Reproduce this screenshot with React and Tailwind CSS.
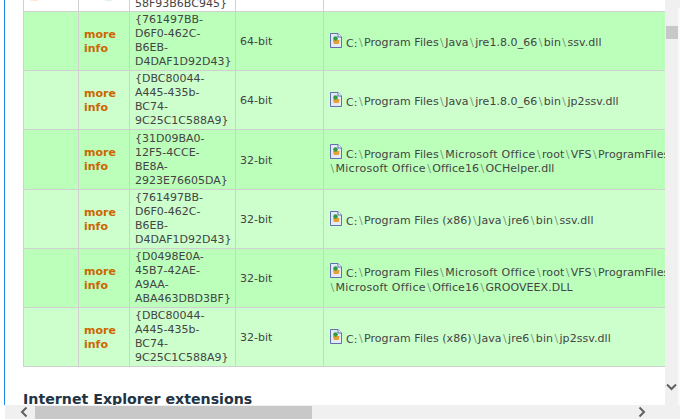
const rows = [
  { shade: 'bg-[#bbffbb]', h: 'h-[59px]', guid: ['{761497BB-', 'D6F0-462C-', 'B6EB-', 'D4DAF1D92D43}'], bits: '64-bit', path: ['C:\\Program Files\\Java\\jre1.8.0_66\\bin\\ssv.dll'] },
  { shade: 'bg-[#ccffcc]', h: 'h-[59px]', guid: ['{DBC80044-', 'A445-435b-', 'BC74-', '9C25C1C588A9}'], bits: '64-bit', path: ['C:\\Program Files\\Java\\jre1.8.0_66\\bin\\jp2ssv.dll'] },
  { shade: 'bg-[#bbffbb]', h: 'h-[60px]', guid: ['{31D09BA0-', '12F5-4CCE-', 'BE8A-', '2923E76605DA}'], bits: '32-bit', path: ['C:\\Program Files\\Microsoft Office\\root\\VFS\\ProgramFiles', '\\Microsoft Office\\Office16\\OCHelper.dll'] },
  { shade: 'bg-[#ccffcc]', h: 'h-[59px]', guid: ['{761497BB-', 'D6F0-462C-', 'B6EB-', 'D4DAF1D92D43}'], bits: '32-bit', path: ['C:\\Program Files (x86)\\Java\\jre6\\bin\\ssv.dll'] },
  { shade: 'bg-[#bbffbb]', h: 'h-[59px]', guid: ['{D0498E0A-', '45B7-42AE-', 'A9AA-', 'ABA463DBD3BF}'], bits: '32-bit', path: ['C:\\Program Files\\Microsoft Office\\root\\VFS\\ProgramFiles', '\\Microsoft Office\\Office16\\GROOVEEX.DLL'] },
  { shade: 'bg-[#ccffcc]', h: 'h-[59px]', guid: ['{DBC80044-', 'A445-435b-', 'BC74-', '9C25C1C588A9}'], bits: '32-bit', path: ['C:\\Program Files (x86)\\Java\\jre6\\bin\\jp2ssv.dll'] },
]

const FileIcon = () => (
  <svg width="12" height="15" viewBox="0 0 12 15" className="inline-block ml-[1px] mr-[4px] relative top-[-3px]">
    <path d="M.5.5h7.500l3.500 3.500v10.500H.5z" fill="#e4eafa" stroke="#5f6fb0" />
    <path d="M8 .5v3.500h3.500" fill="#fff" stroke="#5f6fb0" />
    <path d="M3 7h6.500l-.8 4H3.800z" fill="#e8a030" />
    <circle cx="5.500" cy="5.500" r="2.300" fill="#2f9e3f" />
  </svg>
)

// backslashes sit wider and fainter than the rest of the path
const PathText = ({ text }) =>
  text.split('\\').map((part, i) => (
    <span key={i}>
      {i > 0 && <span className="mx-[1.4px] text-[#7a9a7a]">\</span>}
      <span className={part === 'Microsoft Office' ? 'tracking-[0.28px]' : 'tracking-[0.05px]'}>{part}</span>
    </span>
  ))

const Row = ({ row }) => (
  <div className={`flex ${row.h} ${row.shade} border-b border-[#d0d0d0]`}>
    <div className="w-[55px] shrink-0 border-r border-[#d0d0d0]" />
    <div className="w-[51px] shrink-0 border-r border-[#d0d0d0] flex items-center pl-[5px] pt-[1px] font-bold text-[#cc6600] leading-[14px]">
      <span>more<br />info</span>
    </div>
    <div className="w-[106px] shrink-0 border-r border-[#d0d0d0] flex items-center pl-[5px] leading-[14px] whitespace-nowrap">
      <span>{row.guid.map((g) => <span key={g} className="block">{g}</span>)}</span>
    </div>
    <div className="w-[88px] shrink-0 border-r border-[#d0d0d0] flex items-center pl-[4px] pt-[3px]">{row.bits}</div>
    <div className="flex-1 flex items-center pl-[5px] pt-[4px] leading-[14px] whitespace-nowrap">
      <div>
        <FileIcon />
        <PathText text={row.path[0]} />
        {row.path[1] && <><br /><PathText text={row.path[1]} /></>}
      </div>
    </div>
  </div>
)

export default function App() {
  return (
    <div className="w-[680px] h-[419px] flex flex-col overflow-hidden bg-white text-[11px] text-[#444444] font-['DejaVu_Sans',sans-serif]">
      <div className="flex-1 flex min-h-0">
        <div className="flex-1 min-w-0 overflow-hidden pl-[4px]">
          <div className="border-l border-[#1e88e5] h-full pl-[18px]">
            <div className="w-[760px] border-l border-[#d0d0d0]">
              <div className="flex h-[12px] border-b border-[#d0d0d0] overflow-hidden">
                <div className="w-[55px] shrink-0 border-r border-[#d0d0d0] pl-[7px]">
                  <div className="w-[7px] h-[1px] bg-[#fbe6d8]" />
                </div>
                <div className="w-[51px] shrink-0 border-r border-[#d0d0d0] pl-[26px]">
                  <div className="w-[7px] h-[1px] bg-[#e0f5e0]" />
                </div>
                <div className="w-[106px] shrink-0 border-r border-[#d0d0d0] flex items-end pl-[5px] leading-[14px] whitespace-nowrap">58F93B6BC945&#125;</div>
                <div className="w-[88px] shrink-0 border-r border-[#d0d0d0]" />
              </div>
              {rows.map((row, i) => <Row key={i} row={row} />)}
            </div>
            <h2 className="mt-[23px] text-[14.2px] font-bold leading-[18px] text-[#223344] whitespace-nowrap">Internet Explorer extensions</h2>
          </div>
        </div>
        <div className="w-[15px] shrink-0 flex">
          <div className="w-[13px] bg-[#f0f0f0] flex flex-col">
            <div className="mt-[26px] w-[12px] h-[13px] ml-[1px] bg-[#c8c8c8]" />
            <svg width="13" height="8" viewBox="0 0 13 8" className="mt-[344px]">
              <path d="M2 1.500l4.500 4.500L11 1.500" fill="none" stroke="#606060" strokeWidth="2" />
            </svg>
          </div>
          <div className="w-[2px] flex flex-col bg-[#f0f0f0]">
            <div className="mt-[8px] flex-1 bg-[#fafafa]" />
          </div>
        </div>
      </div>
      <div className="h-[14px] shrink-0 ml-[5px] bg-[#f0f0f0] flex items-center">
        <svg width="10" height="12" viewBox="0 0 10 12" className="ml-[14px] shrink-0">
          <path d="M7.500 1.500L3 6l4.500 4.500" fill="none" stroke="#606060" strokeWidth="2" />
        </svg>
        <div className="ml-[6px] w-[277px] h-[13px] mt-[1px] bg-[#c8c8c8] shrink-0" />
        <svg width="10" height="12" viewBox="0 0 10 12" className="ml-[325px] shrink-0">
          <path d="M2.500 1.500L7 6l-4.500 4.500" fill="none" stroke="#606060" strokeWidth="2" />
        </svg>
      </div>
    </div>
  )
}
